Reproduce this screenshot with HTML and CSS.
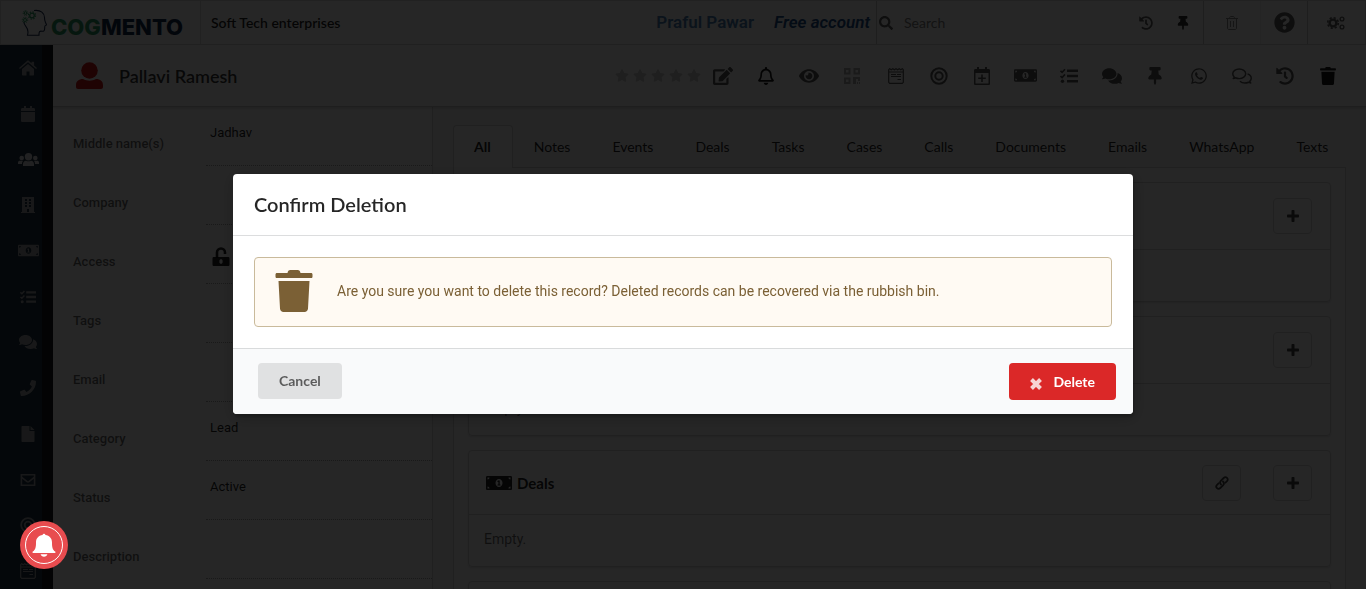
FILE: index.html
```html
<!DOCTYPE html>
<html lang="en">
<head>
<meta charset="utf-8">
<meta name="viewport" content="width=device-width, initial-scale=1">
<title>Cogmento CRM</title>
<link rel="stylesheet" href="styles.css">
</head>
<body>
<svg class="sprite" aria-hidden="true">
  <symbol id="star" viewBox="0 0 576 512"><path d="M259.3 17.8L194 150.2 47.9 171.5c-26.2 3.8-36.7 36.1-17.7 54.6l105.7 103-25 145.5c-4.5 26.3 23.2 46 46.4 33.7L288 439.6l130.7 68.7c23.2 12.2 50.9-7.4 46.4-33.7l-25-145.5 105.7-103c19-18.5 8.5-50.8-17.7-54.6L382 150.2 316.7 17.8c-11.7-23.6-45.6-23.9-57.4 0z"/></symbol>
  <symbol id="history" viewBox="0 0 512 512"><path d="M504 255.5c.3 136.700-111.200 248.400-247.800 248.500-59 0-113.200-20.500-155.800-54.900-11.100-8.900-11.900-25.500-1.800-35.600l11.200-11.300c8.600-8.600 22.400-9.500 31.900-2C173.100 425.100 212.800 440 256 440c101.700 0 184-82.300 184-184 0-101.700-82.300-184-184-184-48.800 0-93.100 19-126.100 49.900l50.800 50.800c10.100 10.100 2.900 27.300-11.300 27.300H24c-8.800 0-16-7.200-16-16V38.600c0-14.300 17.200-21.400 27.300-11.300l49.400 49.400C129.200 34.100 189.600 8 256 8c136.800 0 247.700 110.800 248 247.500zm-180.900 78.800l9.800-12.600c8.100-10.500 6.300-25.500-4.200-33.700L288 256.300V152c0-13.300-10.700-24-24-24h-16c-13.300 0-24 10.700-24 24v135.700l65.400 50.900c10.500 8.100 25.500 6.300 33.700-4.300z"/></symbol>
  <symbol id="pin" viewBox="0 0 384 512"><path d="M298 214.300L285.800 96H328c13.300 0 24-10.700 24-24V24c0-13.300-10.700-24-24-24H56C42.700 0 32 10.700 32 24v48c0 13.300 10.700 24 24 24h42.200L86 214.300C37.500 236.800 0 277.300 0 328c0 13.300 10.700 24 24 24h136v104c0 1.200.3 2.500.8 3.600l24 48c2.900 5.900 11.400 5.900 14.300 0l24-48c.6-1.100.9-2.300.9-3.600V352h136c13.300 0 24-10.700 24-24 0-51.200-38-91.400-86-113.700z"/></symbol>
  <symbol id="comments" viewBox="0 0 576 512"><path d="M416 192c0-88.400-93.100-160-208-160S0 103.600 0 192c0 34.300 14.100 65.900 38 92-13.400 30.200-35.500 54.200-35.800 54.500-2.200 2.300-2.800 5.700-1.500 8.700S4.800 352 8 352c36.600 0 66.900-12.300 88.700-25 32.200 15.700 70.300 25 111.300 25 114.900 0 208-71.600 208-160zm122 220c23.900-26 38-57.700 38-92 0-66.900-53.500-124.200-129.300-148.100.9 6.600 1.300 13.300 1.300 20.100 0 105.900-107.700 192-240 192-10.800 0-21.300-.8-31.700-1.900C207.800 439.600 281.800 480 368 480c41 0 79.100-9.200 111.300-25 21.800 12.700 52.100 25 88.700 25 3.200 0 6.100-1.900 7.300-4.800 1.300-2.900.7-6.300-1.500-8.700-.3-.3-22.400-24.200-35.800-54.500z"/></symbol>
  <symbol id="comments-outline" viewBox="0 0 576 512"><g fill="none" stroke="currentColor" stroke-width="42" stroke-linejoin="round"><path d="M208 54C105 54 22 116 22 192c0 34 16 64 42 90-6 18-16 33-28 47 25-2 45-10 63-22 32 15 68 24 109 24 103 0 186-62 186-139S311 54 208 54z"/><path d="M448 196c63 22 106 68 106 124 0 34-16 64-42 90 6 18 16 33 28 47-25-2-45-10-63-22-32 15-68 24-109 24-56 0-106-20-139-50"/></g></symbol>
  <symbol id="phone" viewBox="0 0 512 512"><path d="M493.400 24.600l-104-24c-11.300-2.600-22.900 3.300-27.500 13.900l-48 112c-4.200 9.800-1.400 21.300 6.900 28l60.600 49.600c-36 76.700-98.900 140.500-177.200 177.200l-49.600-60.600c-6.800-8.300-18.200-11.100-28-6.900l-112 48C3.900 366.500-2 378.100.6 389.400l24 104C27.100 504.200 36.700 512 48 512c256.100 0 464-207.500 464-464 0-11.200-7.700-20.900-18.600-23.400z"/></symbol>
  <symbol id="search" viewBox="0 0 512 512"><path d="M505 442.700L405.300 343c-4.500-4.500-10.600-7-17-7H372c27.600-35.300 44-79.700 44-128C416 93.100 322.900 0 208 0S0 93.100 0 208s93.100 208 208 208c48.300 0 92.700-16.400 128-44v16.300c0 6.400 2.500 12.500 7 17l99.700 99.700c9.400 9.400 24.600 9.400 33.900 0l28.300-28.300c9.400-9.400 9.400-24.600.1-34zM208 336c-70.700 0-128-57.200-128-128 0-70.700 57.200-128 128-128 70.700 0 128 57.200 128 128 0 70.700-57.200 128-128 128z"/></symbol>
  <symbol id="question" viewBox="0 0 512 512"><path d="M504 256c0 137-111 248-248 248S8 393 8 256C8 119.100 119 8 256 8s248 111.100 248 248zM262.700 90c-54.500 0-89.300 23-116.600 63.800-3.500 5.300-2.400 12.400 2.700 16.200l34.700 26.300c5.200 3.900 12.600 3 16.700-2.100 17.900-22.700 30.100-35.800 57.300-35.800 20.400 0 45.700 13.100 45.700 33 0 15-12.400 22.700-32.500 34C247.100 238.500 216 254.900 216 296v4c0 6.600 5.400 12 12 12h56c6.600 0 12-5.400 12-12v-1.300c0-28.500 83.200-29.600 83.200-106.700 0-58-60.200-102-116.500-102zM256 338c-25.400 0-46 20.600-46 46s20.600 46 46 46 46-20.600 46-46-20.600-46-46-46z"/></symbol>
  <symbol id="edit" viewBox="0 0 576 512"><path d="M402.600 83.200l90.200 90.200c3.800 3.800 3.800 10 0 13.800L274.400 405.600l-92.800 10.300c-12.400 1.400-22.900-9.100-21.500-21.500l10.300-92.800L388.800 83.200c3.800-3.800 10-3.800 13.800 0zm162-22.900l-48.800-48.800c-15.200-15.200-39.900-15.200-55.200 0l-35.400 35.400c-3.800 3.800-3.800 10 0 13.800l90.200 90.200c3.800 3.800 10 3.800 13.800 0l35.400-35.400c15.200-15.300 15.200-40 0-55.200zM384 346.200V448H64V128h229.800c3.200 0 6.200-1.300 8.500-3.500l40-40c7.600-7.600 2.200-20.500-8.500-20.500H48C21.500 64 0 85.500 0 112v352c0 26.500 21.500 48 48 48h352c26.500 0 48-21.500 48-48V306.200c0-10.700-12.900-16-20.500-8.500l-40 40c-2.200 2.300-3.500 5.300-3.500 8.500z"/></symbol>
  <symbol id="bell-outline" viewBox="0 0 448 512"><path d="M439.400 362.300c-19.300-20.800-55.500-52-55.500-154.300 0-77.700-54.500-139.900-127.900-155.200V32c0-17.700-14.300-32-32-32s-32 14.300-32 32v20.800C118.600 68.100 64.100 130.300 64.100 208c0 102.300-36.200 133.500-55.500 154.300-6 6.400-8.700 14.200-8.600 21.700.1 16.400 13 32 32.100 32h383.800c19.100 0 32-15.600 32.100-32 .1-7.500-2.600-15.300-8.600-21.700zM67.500 368c21.200-28 44.400-74.300 44.500-160 0-61.900 50.100-112 112-112s112 50.100 112 112c.1 85.700 23.300 132 44.500 160zM224 512c35.300 0 64-28.700 64-64H160c0 35.300 28.700 64 64 64z"/></symbol>
  <symbol id="bell" viewBox="0 0 24 24"><path d="M10.600 2.100a1.400 1.400 0 0 1 2.800 0C17.500 2.700 20 5.400 20 9.500c0 5 .6 7.300 3.200 9.100.6.500.4 1.400-.4 1.400H1.200c-.8 0-1-.9-.4-1.400C3.400 16.800 4 14.500 4 9.500c0-4.100 2.500-6.800 6.600-7.400zM8.600 21.300h6.800c-.4 1.600-1.700 2.500-3.400 2.500s-3-.9-3.400-2.500z"/></symbol>
  <symbol id="eye" viewBox="0 0 576 512"><path d="M572.500 241.400C518.300 135.600 410.900 64 288 64S57.700 135.600 3.500 241.400a32.400 32.400 0 0 0 0 29.200C57.700 376.400 165.100 448 288 448s230.300-71.600 284.500-177.400a32.400 32.400 0 0 0 0-29.200zM288 400a144 144 0 1 1 144-144 143.900 143.900 0 0 1-144 144zm0-240a95.300 95.300 0 0 0-25.300 3.800 47.900 47.900 0 0 1-66.900 66.900A95.800 95.800 0 1 0 288 160z"/></symbol>
  <symbol id="whatsapp" viewBox="0 0 448 512"><path d="M380.900 97.100C339 55.100 283.200 32 223.900 32c-122.400 0-222 99.600-222 222 0 39.100 10.200 77.300 29.600 111L0 480l117.700-30.900c32.400 17.700 68.900 27 106.100 27h.1c122.300 0 224.100-99.600 224.100-222 0-59.300-25.200-115-67.100-157zm-157 341.600c-33.200 0-65.700-8.900-94-25.700l-6.700-4-69.800 18.300L72 359.200l-4.400-7c-18.500-29.400-28.200-63.300-28.200-98.200 0-101.700 82.800-184.500 184.600-184.500 49.300 0 95.600 19.200 130.400 54.100 34.800 34.900 56.200 81.200 56.100 130.500 0 101.800-84.900 184.600-186.600 184.600zm101.200-138.200c-5.500-2.800-32.800-16.200-37.900-18-5.100-1.900-8.800-2.800-12.500 2.800-3.700 5.600-14.300 18-17.600 21.800-3.200 3.700-6.500 4.200-12 1.400-32.600-16.300-54-29.100-75.500-66-5.700-9.800 5.700-9.100 16.300-30.300 1.800-3.700.9-6.900-.5-9.700-1.400-2.800-12.500-30.100-17.100-41.200-4.500-10.800-9.100-9.300-12.500-9.500-3.200-.2-6.900-.2-10.600-.2-3.700 0-9.700 1.400-14.800 6.900-5.100 5.600-19.400 19-19.400 46.300 0 27.300 19.900 53.700 22.600 57.400 2.800 3.700 39.100 59.700 94.800 83.800 35.200 15.200 49 16.500 66.600 13.900 10.700-1.600 32.800-13.400 37.400-26.400 4.600-13 4.600-24.100 3.200-26.400-1.300-2.500-5-3.900-10.500-6.600z"/></symbol>
  <symbol id="trash" viewBox="0 0 38 42"><path d="M2 3h10.500c.4-2 1-3 3-3h7c2 0 2.600 1 3 3H36c1 0 1.500.6 1.500 1.500v2c0 1-.5 1.500-1.500 1.500H2C1 8 .5 7.500.5 6.500v-2C.5 3.600 1 3 2 3zM3.500 11h31L33 38.500c-.2 2.300-1.500 3.500-3.500 3.500h-21c-2 0-3.300-1.200-3.500-3.500z"/></symbol>
  <symbol id="trash-outline" viewBox="0 0 12 14"><g fill="none" stroke="currentColor"><path d="M0 2.500h12M3.500 2.500C3.500 1 4 .5 5 .5h2c1 0 1.500.5 1.500 2M1.500 2.500v9.500c0 1 .5 1.500 1.500 1.500h6c1 0 1.500-.5 1.500-1.500V2.500M4.500 5v6M7.500 5v6"/></g></symbol>
  <symbol id="cogs" viewBox="0 0 18 14"><g fill="none" stroke="currentColor"><circle cx="6" cy="7" r="3.400" stroke-width="2.400"/><circle cx="6" cy="7" r="5.300" stroke-width="1.600" stroke-dasharray="2.200 1.960"/><circle cx="15" cy="3" r="1.900" stroke-width="1.300"/><circle cx="15" cy="11" r="1.900" stroke-width="1.300"/></g></symbol>
  <symbol id="home" viewBox="0 0 18 15"><path d="M9 3.500l6 5V14c0 .6-.3 1-1 1h-3.500v-4h-3v4H4c-.7 0-1-.4-1-1V8.500zM8 .5c.6-.6 1.400-.6 2 0l2.500 2.200V1.300h2.600v3.600L18 7.500l-.9 1L9 1.800.9 8.500l-.9-1z"/></symbol>
  <symbol id="calendar" viewBox="0 0 14 16"><path d="M3 0h2v2h4V0h2v2h1.500c1 0 1.500.5 1.500 1.500V5H0V3.500C0 2.500.5 2 1.500 2H3zM0 6h14v8.500c0 1-.5 1.500-1.500 1.500h-11C.5 16 0 15.500 0 14.500z"/></symbol>
  <symbol id="users" viewBox="0 0 21 13"><circle cx="10.500" cy="3.700" r="3.700"/><circle cx="3.700" cy="5" r="2.300"/><circle cx="17.300" cy="5" r="2.300"/><path d="M5 13v-2c0-2 1.200-3.300 3-3.300 1.600.8 3.400.8 5 0 1.800 0 3 1.300 3 3.300v2zM0 11V9.500C0 8.300.8 7.700 2 7.700h3.200C4.200 8.700 4 9.600 4 11zM21 11V9.500c0-1.200-.8-1.800-2-1.800h-3.200c1 1 1.200 1.900 1.200 3.300z"/></symbol>
  <symbol id="building" viewBox="0 0 16 16"><path fill-rule="evenodd" d="M2 0h12v15h1v1H1v-1h1zM5 2v2h2V2zm4 0v2h2V2zM5 5v2h2V5zm4 0v2h2V5zM5 8v2h2V8zm4 0v2h2V8zm-2 4v3h2v-3z"/></symbol>
  <symbol id="money" viewBox="0 0 26 14"><path fill-rule="evenodd" d="M1.500 0h23c1 0 1.500.5 1.500 1.500v11c0 1-.5 1.500-1.500 1.500h-23C.5 14 0 13.500 0 12.500v-11C0 .5.500 0 1.500 0zM1.500 1.500v2c1.200 0 2-.8 2-2zm21 0c0 1.200.8 2 2 2v-2zM1.500 10.500v2h2c0-1.200-.8-2-2-2zm23 0c-1.200 0-2 .8-2 2h2zM13 3C11 3 9.500 4.700 9.500 7S11 11 13 11s3.500-1.700 3.500-4S15 3 13 3z"/><path d="M12 4.500h1.700v4h.8v1h-3v-1h.9V6h-.9V5z"/></symbol>
  <symbol id="tasks" viewBox="0 0 18 16"><path d="M7 1.500h11v2.600H7zM7 6.700h11v2.600H7zM7 12h11v2.600H7z"/><circle cx="2.500" cy="13.300" r="1.700"/><path fill="none" stroke="currentColor" stroke-width="1.600" d="M.5 2.800l1.600 1.500L5 1.200M.5 8l1.600 1.500L5 6.400"/></symbol>
  <symbol id="file" viewBox="0 0 13 16"><path d="M1 0h7v5h5v10c0 .7-.3 1-1 1H1c-.7 0-1-.3-1-1V1c0-.7.3-1 1-1zM9 0l4 4H9z"/></symbol>
  <symbol id="mail" viewBox="0 0 17 13"><path fill="none" stroke="currentColor" stroke-width="1.700" d="M1.500 1h14v11h-14zM1.500 3.500l6 4.800c.8.500 1.200.5 2 0l6-4.800"/></symbol>
  <symbol id="target" viewBox="0 0 18 18"><g fill="none" stroke="currentColor" stroke-width="2"><circle cx="9" cy="9" r="7.700"/><circle cx="9" cy="9" r="3.700"/></g></symbol>
  <symbol id="notes" viewBox="0 0 16 16"><path fill="none" stroke="currentColor" stroke-width="1.200" d="M1.700.7l1.500 1 1.600-1 1.600 1 1.600-1 1.600 1 1.600-1 1.600 1 1.500-1 1 1v12.600l-1 1H1.700l-1-1V1.700zM.7 4h14.600M3 6.500h5M9 6.500h4M3 8.500h10M9.500 11.500H13"/></symbol>
  <symbol id="qr" viewBox="0 0 16 16"><path fill="none" stroke="currentColor" stroke-width="2" d="M1 1h4.500v4.500H1zM10.500 1H15v4.500h-4.500zM1 10.500h4.500V15H1z"/><path d="M9 9h7v4h-2v-2h-2v5H9zM13 14h1v2h-1zM15 14h1v2h-1z"/></symbol>
  <symbol id="calendar-plus" viewBox="0 0 16 18"><path fill-rule="evenodd" d="M3 0h2v2h6V0h2v2h1.500c1 0 1.500.5 1.500 1.500v13c0 1-.5 1.500-1.500 1.500h-13C.5 18 0 17.500 0 16.500v-13C0 2.500.5 2 1.500 2H3zM1.500 6v10.500h13V6zM7.200 7.500h1.600v3h3v1.600h-3v3H7.200v-3h-3v-1.600h3z"/></symbol>
  <symbol id="unlock" viewBox="0 0 17 20"><path fill="none" stroke="currentColor" stroke-width="2.600" d="M4.500 10.500V5.500a4 4 0 0 1 8 0V7"/><path fill-rule="evenodd" d="M1.500 10h14.200c.8 0 1.300.5 1.300 1.300v6.400c0 .8-.5 1.300-1.300 1.300H1.500C.5 19 0 18.500 0 17.700v-6.400c0-.8.500-1.300 1.500-1.300zm7 2.300c-1 0-1.600.6-1.600 1.500v1.400c0 .9.600 1.500 1.600 1.500s1.600-.6 1.600-1.500v-1.400c0-.9-.6-1.500-1.600-1.500z"/></symbol>
  <symbol id="user" viewBox="0 0 27 27"><circle cx="13.500" cy="8.500" r="8.300"/><path d="M7 17c4 2.300 9 2.300 13 0 4.500 0 7 2.500 7 6v2c0 1.300-.7 2-2 2H2c-1.300 0-2-.7-2-2v-2c0-3.500 2.500-6 7-6z"/></symbol>
  <symbol id="plus" viewBox="0 0 12 12"><path d="M4.500.7c0-.5.2-.7.700-.7h1.600c.5 0 .7.200.7.700v3.800h3.800c.5 0 .7.200.7.700v1.600c0 .5-.2.700-.7.700H7.500v3.800c0 .5-.2.700-.7.700H5.200c-.5 0-.7-.2-.7-.7V7.500H.7c-.5 0-.7-.2-.7-.7V5.200c0-.5.2-.7.700-.7h3.800z"/></symbol>
  <symbol id="link" viewBox="0 0 14 14"><g fill="none" stroke="currentColor" stroke-width="1.800" stroke-linecap="round"><path d="M6 8.500c-1.200-1.200-1.200-2.600 0-3.800L8.700 2c1.100-1.100 2.300-1.100 3.300-.1s1 2.300 0 3.300L10.500 6.700"/><path d="M8 5.500c1.200 1.200 1.200 2.600 0 3.800L5.300 12c-1.100 1.100-2.300 1.100-3.300.1s-1-2.300 0-3.300l1.500-1.500"/></g></symbol>
  <symbol id="cross" viewBox="0 0 12 12"><path fill="none" stroke="currentColor" stroke-width="4" d="M1.500 1.500l9 9M10.500 1.500l-9 9"/></symbol>
  <symbol id="head" viewBox="0 0 26 28"><path fill="none" stroke="#1c2f52" stroke-width="1.100" d="M13 1.500c7-1 10.500 3 10.500 7 0 2 0 3 1 5s1.500 2.500 0 3c-1 .3-.8 1-.8 2.500 0 3-1 3.500-3 3.200-2-.2-2.700.5-2.700 3v1H6.500c1.200-4 .6-6-1.500-8.500-1.500-1.800-2-3-2.200-5"/><g fill="none" stroke="#2a9d63"><circle cx="11" cy="6.500" r="2.300" stroke-width="1.300"/><circle cx="11" cy="6.500" r="3.600" stroke-width="1.200" stroke-dasharray="1.400 1.430"/><circle cx="4.500" cy="4" r="1.300"/><circle cx="4.500" cy="4" r="2.300" stroke-dasharray="1 .8"/><circle cx="4" cy="11" r="1.500"/><circle cx="4" cy="11" r="2.700" stroke-dasharray="1.100 1.020"/></g></symbol>
</svg>

<header class="topbar">
  <a class="logo" href="#" aria-label="Cogmento"><svg class="logo-head"><use href="#head"/></svg><span class="logo-text"><span class="logo-cog">COG</span>MENTO</span></a>
  <span class="company">Soft Tech enterprises</span>
  <span class="person">Praful Pawar</span>
  <a class="account" href="#">Free account</a>
  <label class="search"><svg class="i14"><use href="#search"/></svg><input type="search" placeholder="Search" aria-label="Search"></label>
  <button class="top-plain" aria-label="History"><svg class="i14"><use href="#history"/></svg></button>
  <button class="top-plain top-pin" aria-label="Pinned"><svg class="i14"><use href="#pin"/></svg></button>
  <button class="top-cell faint" aria-label="Rubbish bin"><svg class="i14"><use href="#trash-outline"/></svg></button>
  <button class="top-cell top-help" aria-label="Help"><svg class="i21"><use href="#question"/></svg></button>
  <button class="top-cell" aria-label="Settings"><svg class="i18"><use href="#cogs"/></svg></button>
</header>

<div class="shell">
  <nav class="sidebar" aria-label="Main">
    <a href="#" aria-label="Home"><svg class="i18"><use href="#home"/></svg></a>
    <a href="#" aria-label="Calendar"><svg class="i16"><use href="#calendar"/></svg></a>
    <a href="#" class="current" aria-label="Contacts"><svg class="i21"><use href="#users"/></svg></a>
    <a href="#" aria-label="Companies"><svg class="i16"><use href="#building"/></svg></a>
    <a href="#" aria-label="Deals"><svg class="i21"><use href="#money"/></svg></a>
    <a href="#" aria-label="Tasks"><svg class="i16"><use href="#tasks"/></svg></a>
    <a href="#" aria-label="Cases"><svg class="i18"><use href="#comments"/></svg></a>
    <a href="#" aria-label="Calls"><svg class="i16"><use href="#phone"/></svg></a>
    <a href="#" aria-label="Documents"><svg class="i16"><use href="#file"/></svg></a>
    <a href="#" aria-label="Email"><svg class="i16"><use href="#mail"/></svg></a>
    <a href="#" aria-label="Campaigns"><svg class="i16"><use href="#target"/></svg></a>
    <a href="#" aria-label="Forms"><svg class="i16"><use href="#notes"/></svg></a>
  </nav>

  <main class="record">
    <div class="record-head">
      <svg class="avatar"><use href="#user"/></svg>
      <h1 class="record-name">Pallavi Ramesh</h1>
      <div class="rating" role="img" aria-label="Rating: 0 of 5"><svg><use href="#star"/></svg><svg><use href="#star"/></svg><svg><use href="#star"/></svg><svg><use href="#star"/></svg><svg><use href="#star"/></svg></div>
      <div class="actions">
        <button aria-label="Edit"><svg class="i20"><use href="#edit"/></svg></button>
        <button class="dark" aria-label="Notify"><svg class="i18"><use href="#bell-outline"/></svg></button>
        <button aria-label="Watch"><svg class="i20"><use href="#eye"/></svg></button>
        <button class="faint" aria-label="QR code"><svg class="i16"><use href="#qr"/></svg></button>
        <button aria-label="Note"><svg class="i16"><use href="#notes"/></svg></button>
        <button aria-label="Campaign"><svg class="i18"><use href="#target"/></svg></button>
        <button aria-label="Add event"><svg class="i18"><use href="#calendar-plus"/></svg></button>
        <button aria-label="Add deal"><svg class="i23"><use href="#money"/></svg></button>
        <button aria-label="Add task"><svg class="i18"><use href="#tasks"/></svg></button>
        <button aria-label="Add case"><svg class="i20"><use href="#comments"/></svg></button>
        <button aria-label="Pin"><svg class="i18"><use href="#pin"/></svg></button>
        <button aria-label="WhatsApp"><svg class="i18"><use href="#whatsapp"/></svg></button>
        <button aria-label="Text"><svg class="i20"><use href="#comments-outline"/></svg></button>
        <button aria-label="Record history"><svg class="i18"><use href="#history"/></svg></button>
        <button class="dark" aria-label="Delete record"><svg class="i18"><use href="#trash"/></svg></button>
      </div>
    </div>

    <div class="columns">
      <dl class="fields">
        <div class="field"><dt>Middle name(s)</dt><dd>Jadhav</dd></div>
        <div class="field"><dt>Company</dt><dd></dd></div>
        <div class="field"><dt>Access</dt><dd class="access"><svg class="i20"><use href="#unlock"/></svg></dd></div>
        <div class="field"><dt>Tags</dt><dd></dd></div>
        <div class="field"><dt>Email</dt><dd></dd></div>
        <div class="field"><dt>Category</dt><dd>Lead</dd></div>
        <div class="field"><dt>Status</dt><dd>Active</dd></div>
        <div class="field"><dt>Description</dt><dd></dd></div>
      </dl>

      <section class="activity">
        <nav class="tabs" aria-label="Record sections">
          <a class="tab active" href="#">All</a><a class="tab" href="#">Notes</a><a class="tab" href="#">Events</a><a class="tab" href="#">Deals</a><a class="tab" href="#">Tasks</a><a class="tab" href="#">Cases</a><a class="tab" href="#">Calls</a><a class="tab" href="#">Documents</a><a class="tab" href="#">Emails</a><a class="tab" href="#">WhatsApp</a><a class="tab" href="#">Texts</a>
        </nav>
        <div class="panel">
          <section class="card">
            <div class="card-head"><button class="square" aria-label="Add"><svg class="i12"><use href="#plus"/></svg></button></div>
            <div class="card-body"></div>
          </section>
          <section class="card">
            <div class="card-head"><button class="square" aria-label="Add"><svg class="i12"><use href="#plus"/></svg></button></div>
            <div class="card-body">Empty.</div>
          </section>
          <section class="card">
            <div class="card-head compact"><h2 class="card-title"><svg class="i26"><use href="#money"/></svg>Deals</h2><button class="square" aria-label="Link deal"><svg class="i14"><use href="#link"/></svg></button><button class="square" aria-label="Add deal"><svg class="i12"><use href="#plus"/></svg></button></div>
            <div class="card-body">Empty.</div>
          </section>
          <section class="card"><div class="card-head"></div></section>
        </div>
      </section>
    </div>
  </main>
</div>

<div class="dimmer">
  <div class="modal" role="dialog" aria-modal="true" aria-labelledby="modal-title">
    <h2 class="modal-title" id="modal-title">Confirm Deletion</h2>
    <div class="modal-content">
      <div class="message"><svg class="message-icon"><use href="#trash"/></svg><p>Are you sure you want to delete this record? Deleted records can be recovered via the rubbish bin.</p></div>
    </div>
    <div class="modal-actions">
      <button class="btn">Cancel</button>
      <button class="btn danger"><svg class="i12"><use href="#cross"/></svg>Delete</button>
    </div>
  </div>
</div>
<button class="alerts" aria-label="Alerts"><span class="alerts-ring"><svg><use href="#bell"/></svg></span></button>
</body>
</html>
```
FILE: styles.css
```css
* { box-sizing: border-box; }
html, body { height: 100%; }
body {
  margin: 0;
  display: flex;
  flex-direction: column;
  overflow: hidden;
  background: #fff;
  color: rgba(0, 0, 0, .87);
  font: 14px/20px Roboto, "Liberation Sans", sans-serif;
}
svg { display: block; fill: currentColor; flex: none; }
button { border: 0; padding: 0; background: none; color: inherit; font: inherit; cursor: pointer; }
a { color: inherit; text-decoration: none; }
h1, h2, p, dl, dd { margin: 0; }
.sprite { position: absolute; width: 0; height: 0; }

.i12 { width: 12px; height: 12px; }
.i14 { width: 14px; height: 14px; }
.i16 { width: 16px; height: 16px; }
.i18 { width: 18px; height: 18px; }
.i20 { width: 20px; height: 20px; }
.i21 { width: 21px; height: 21px; }
.i23 { width: 23px; height: 23px; }
.i26 { width: 26px; height: 26px; }

/* Top bar */
.topbar {
  flex: none;
  display: flex;
  align-items: stretch;
  height: 45px;
  padding-right: 1px;
  border: 1px solid #dcdcdc;
  font-family: Lato, sans-serif;
  line-height: 43px;
}
.logo { display: flex; align-items: center; gap: 4px; width: 200px; padding-left: 20px; border-right: 1px solid #dcdcdc; }
.logo-head { width: 26px; height: 28px; }
.logo-text { padding-top: 8px; color: #12284c; font: 800 22px/26px Inter, sans-serif; }
.logo-cog { color: #2a9d63; }
.company { flex: 1; padding-left: 10px; font-weight: 600; }
.person { padding-right: 20px; color: #4a7fb5; font: 600 17px/43px Roboto, sans-serif; }
.account { padding-right: 6px; color: #1d4f8c; font: italic 600 17px/43px Roboto, sans-serif; }
.search { display: flex; align-items: center; gap: 11px; width: 253px; padding-left: 2px; border-left: 1px solid #c8c8c8; color: #606060; }
.search input { width: 120px; border: 0; padding: 0; outline: 0; background: none; font: 14px/20px Lato, sans-serif; }
.search input::placeholder { color: #808080; opacity: 1; }
.top-plain { display: grid; place-items: center; width: 34px; color: #606060; }
.top-pin { width: 40px; color: #303030; }
.top-cell { display: grid; place-items: center; width: 57px; border-left: 1px solid #c8c8c8; color: #606060; }
.top-help { width: 47px; border-left-color: #f0f0f0; }
.top-cell.faint { color: #909090; }

/* Shell */
.shell { flex: 1; display: flex; min-height: 0; }
.sidebar {
  flex: none;
  display: flex;
  flex-direction: column;
  width: 53px;
  height: 549px;
  border-right: 11px solid #14181c;
  background: #1b3042;
  color: #a4a4a8;
}
.sidebar a { flex: 1; display: flex; align-items: center; justify-content: center; width: 56px; }
.sidebar .current { color: #dcdce0; }
.record { flex: 1; min-width: 0; display: flex; flex-direction: column; }
.record-head {
  position: relative;
  flex: none;
  display: flex;
  align-items: center;
  height: 62px;
  padding: 0 16px 0 23px;
  border-bottom: 1px solid #c8c8c8;
  box-shadow: 0 1px 3px rgba(0, 0, 0, .2);
}
.avatar { width: 27px; height: 27px; color: #d01919; }
.record-name { flex: 1; padding-left: 16px; font: 600 18px/24px Lato, sans-serif; color: rgba(0, 0, 0, .8); }
.rating { display: flex; gap: 4px; color: #d0d0d0; }
.rating svg { width: 14px; height: 13px; }
.actions { display: grid; grid-template-columns: repeat(15, 1fr); width: 649px; color: #585858; }
.actions button { display: grid; place-items: center; height: 24px; }
.actions .dark { color: #181818; }
.actions .faint { color: #b0b0b0; }

/* Details */
.columns { flex: 1; display: flex; min-height: 0; overflow: hidden; background: #f7f7f7; }
.fields { flex: none; width: 380px; background: #fff; border-right: 1px solid #d8d8d8; }
.field { display: grid; grid-template-columns: 153px 1fr; height: 59px; font-size: 13px; line-height: 18px; }
.field dt { padding: 28px 0 0 20px; color: rgba(0, 0, 0, .6); font-weight: 500; }
.field dd { padding: 17px 0 0 4px; border-bottom: 1px dotted #a8a8a8; }
.field .access { padding: 22px 0 0 5px; }

/* Activity */
.activity { flex: 1; min-width: 0; padding: 18px 20px 0; }
.tabs { display: flex; border-bottom: 1px solid #d4d4d4; font: 14px/41px Lato, sans-serif; white-space: nowrap; }
.tab { padding: 0 20px; border: 1px solid transparent; border-bottom: 0; }
.tab.active { margin-bottom: -1px; padding-right: 21px; border-color: #d4d4d4; border-radius: 4px 4px 0 0; background: #fff; font-weight: 700; }
.panel { display: flex; flex-direction: column; gap: 14px; padding: 14px; border: 1px solid #d4d4d4; border-top: 0; background: #fff; }
.card { border: 1px solid #d4d4d4; border-radius: 4px; box-shadow: 0 1px 2px rgba(34, 36, 38, .15); }
.card-head { display: flex; align-items: center; justify-content: flex-end; gap: 32px; height: 67px; padding: 0 18px 0 17px; border-bottom: 1px solid #d4d4d4; }
.card-head.compact { height: 64px; }
.card-title { flex: 1; display: flex; align-items: center; gap: 5px; font: 700 15px/20px Lato, sans-serif; }
.card-body { height: 51px; padding: 14px 15px; color: rgba(0, 0, 0, .6); }
.square { display: grid; place-items: center; width: 39px; height: 36px; border: 1px solid #d8d8d8; border-radius: 4px; color: #484848; }

/* Dialog */
.dimmer { position: fixed; inset: 0; display: flex; align-items: center; justify-content: center; padding-bottom: 1px; background: rgba(0, 0, 0, .85); }
.modal { width: 900px; max-width: 95%; overflow: hidden; border-radius: 4px; background: #fff; box-shadow: 1px 3px 3px rgba(0, 0, 0, .2), 1px 3px 15px 2px rgba(0, 0, 0, .2); }
.modal-title { padding: 18px 21px; border-bottom: 1px solid #dcddde; color: rgba(0, 0, 0, .85); font: 600 20px/25px Lato, sans-serif; }
.modal-content { padding: 21px; }
.message { display: flex; align-items: center; gap: 24px; min-height: 70px; padding: 12px 20px 14px; border: 1px solid #c9ba9b; border-radius: 4px; background: #fffaf3; color: #7b6035; }
.message-icon { width: 38px; height: 42px; }
.modal-actions { display: flex; justify-content: space-between; padding: 14px 17px 14px 25px; border-top: 1px solid #d9dbdc; background: #f9fafb; }
.btn { display: flex; align-items: center; gap: 11px; height: 36px; padding: 0 21px; border-radius: 4px; background: #e0e1e2; color: rgba(0, 0, 0, .6); font: 700 14px/14px Lato, sans-serif; }
.danger { height: 37px; background: #db2828; color: #fff; }
.danger svg { margin-top: 4px; opacity: .8; }

/* Alerts bubble */
.alerts { position: fixed; left: 20px; bottom: 20px; display: grid; place-items: center; width: 48px; height: 48px; border-radius: 50%; background: #e84c4f; color: #fff; }
.alerts-ring { display: grid; place-items: center; width: 38px; height: 38px; border: 1px solid #fff; border-radius: 50%; }
.alerts svg { width: 24px; height: 24px; }
```
